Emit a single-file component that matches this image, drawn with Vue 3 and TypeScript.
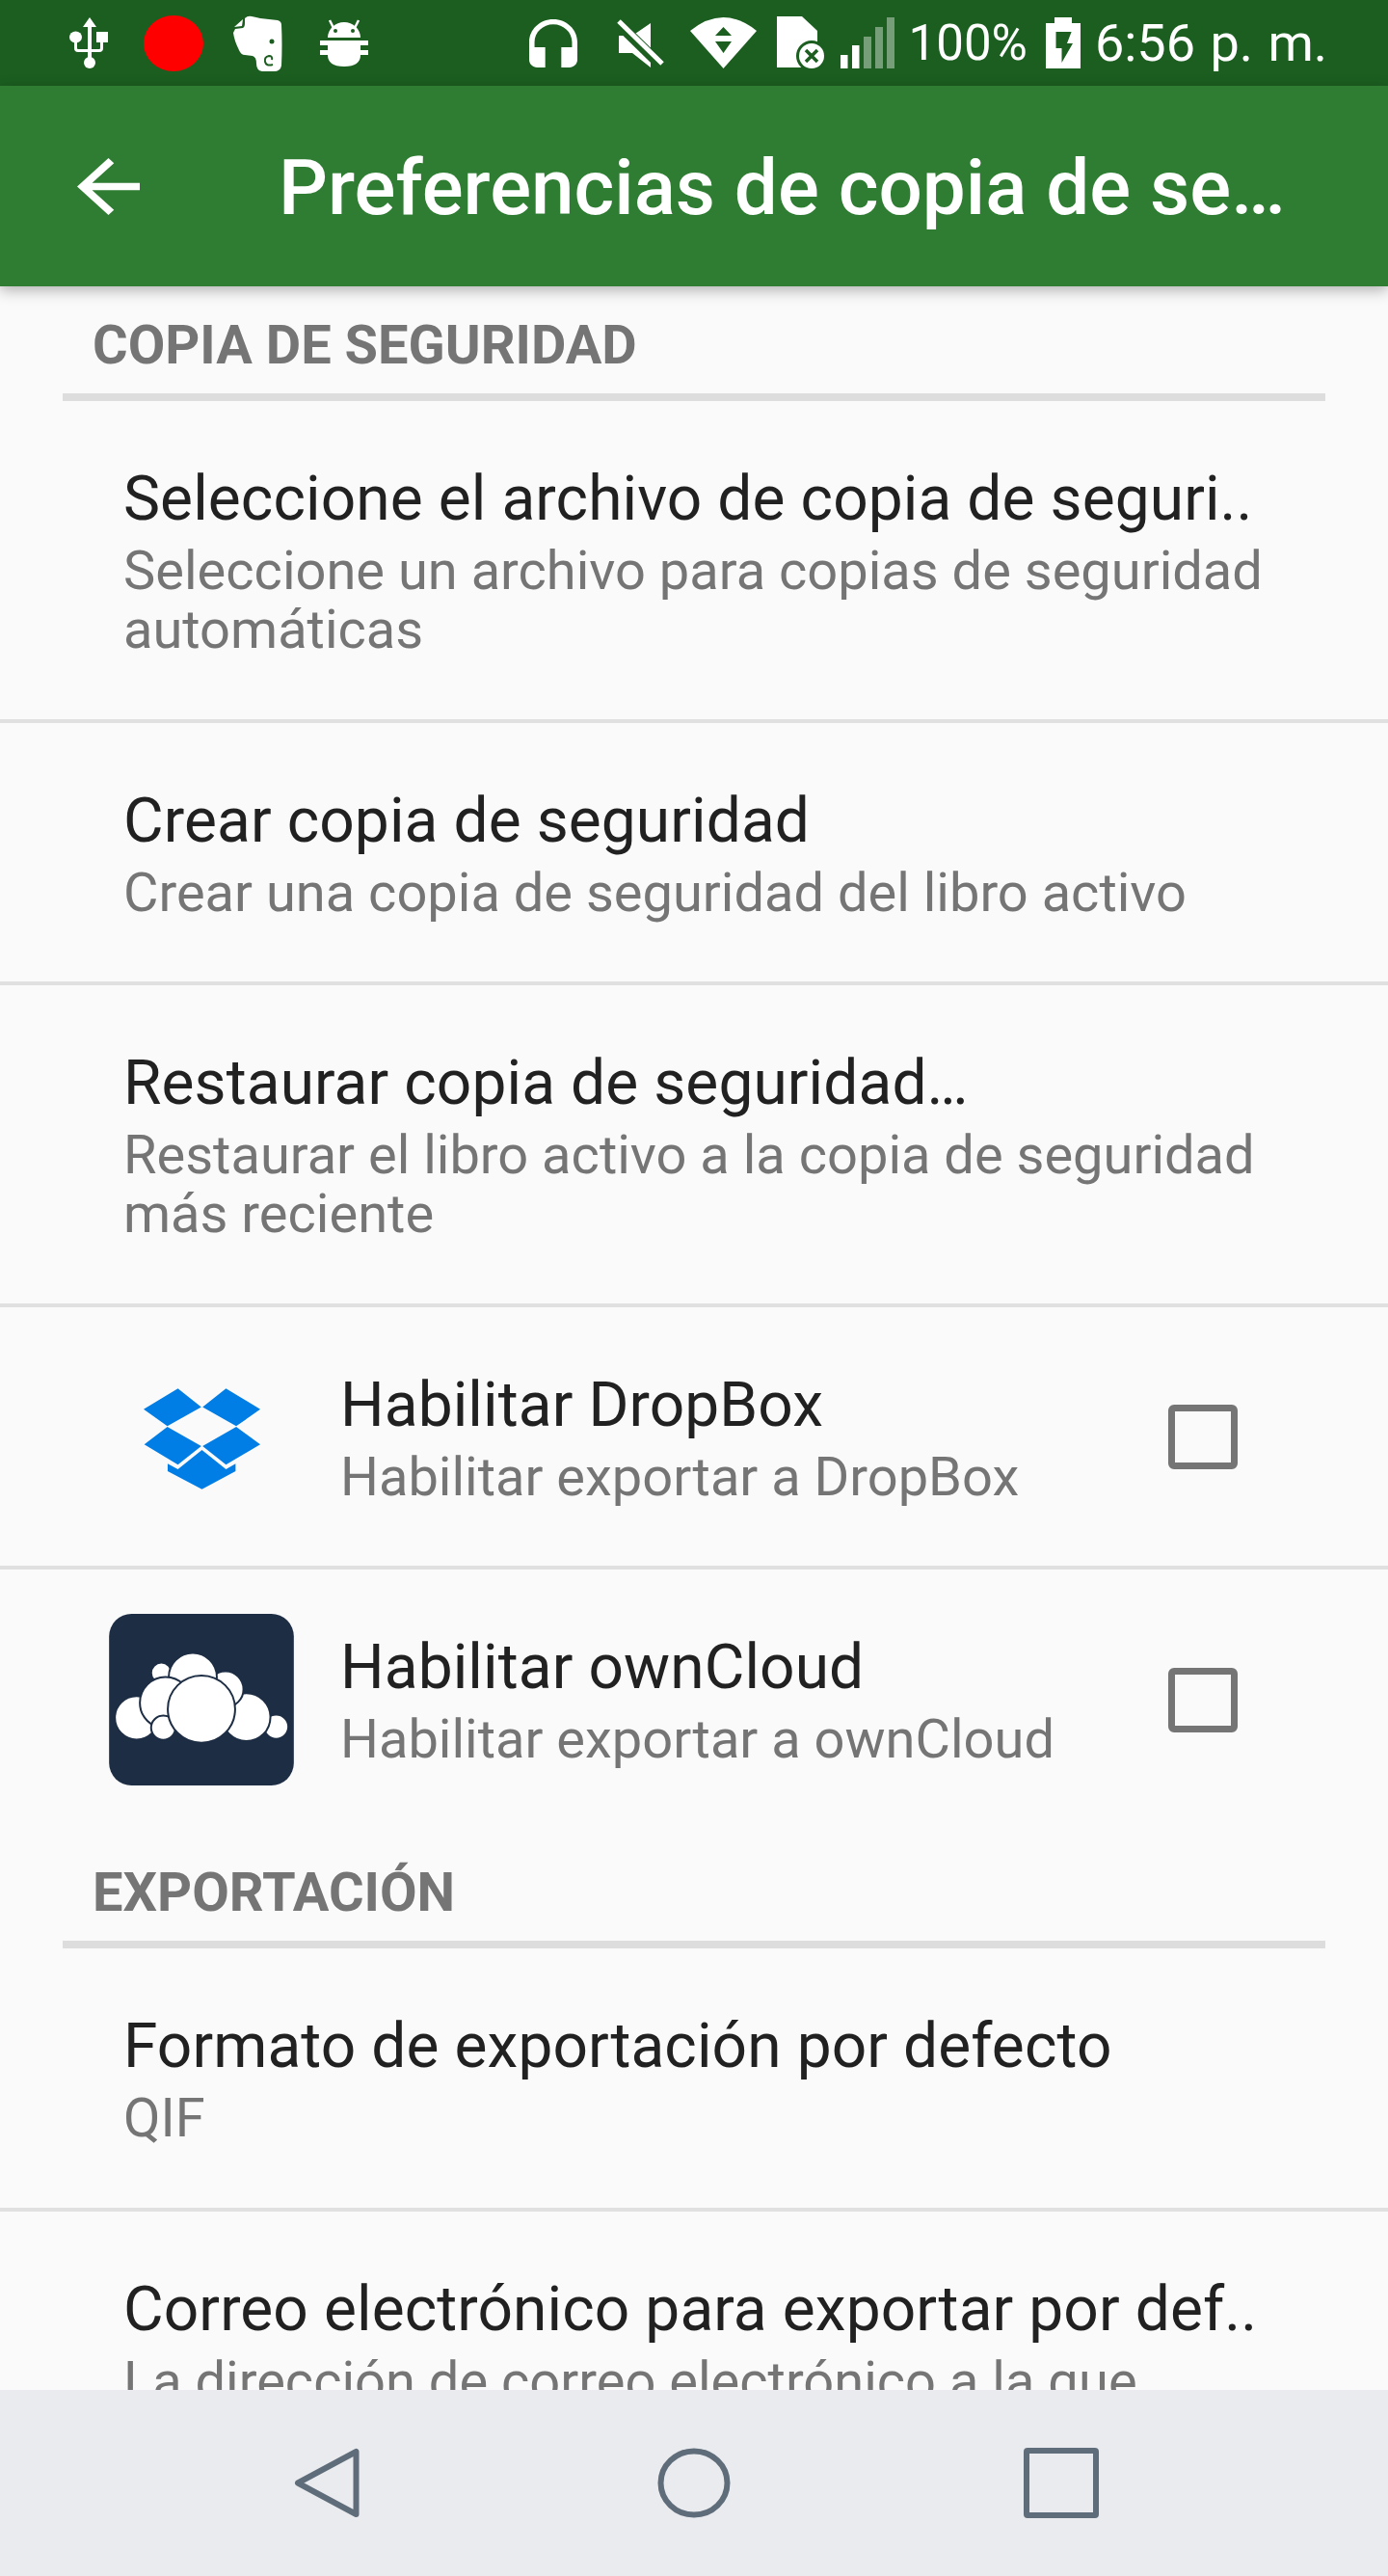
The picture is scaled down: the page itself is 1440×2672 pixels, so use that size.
<script setup lang="ts">
interface Pref {
  title: string
  summary: string[]
  icon?: 'dropbox' | 'owncloud'
  last?: boolean
}

const backupPrefs: Pref[] = [
  {
    title: 'Seleccione el archivo de copia de seguri..',
    summary: ['Seleccione un archivo para copias de seguridad', 'automáticas']
  },
  {
    title: 'Crear copia de seguridad',
    summary: ['Crear una copia de seguridad del libro activo']
  },
  {
    title: 'Restaurar copia de seguridad…',
    summary: ['Restaurar el libro activo a la copia de seguridad', 'más reciente']
  },
  {
    title: 'Habilitar DropBox',
    summary: ['Habilitar exportar a DropBox'],
    icon: 'dropbox'
  },
  {
    title: 'Habilitar ownCloud',
    summary: ['Habilitar exportar a ownCloud'],
    icon: 'owncloud',
    last: true
  }
]

const exportPrefs: Pref[] = [
  {
    title: 'Formato de exportación por defecto',
    summary: ['QIF']
  },
  {
    title: 'Correo electrónico para exportar por def..',
    summary: ['La dirección de correo electrónico a la que'],
    last: true
  }
]

const sections = [
  { name: 'COPIA DE SEGURIDAD', prefs: backupPrefs },
  { name: 'EXPORTACIÓN', prefs: exportPrefs }
]

const cloudCircles = [
  [185, 1147, 68],
  [620, 1175, 38],
  [527, 1145, 75],
  [462, 1058, 56],
  [262, 1007, 32],
  [360, 1020, 75],
  [275, 1100, 80],
  [268, 1178, 38],
  [387, 1120, 105]
]
</script>

<template>
  <div class="phone">
    <div class="status-bar">
      <div class="status-left">
        <svg class="usb" width="41" height="53" viewBox="0 0 41 53">
          <path d="M21 0l7 10h-5v38h-4V10h-5z" fill="#fff" />
          <circle cx="21" cy="47" r="6" fill="#fff" />
          <ellipse cx="6.5" cy="20.5" rx="6.5" ry="6" fill="#fff" />
          <rect x="28" y="15" width="12" height="11" fill="#fff" />
          <path d="M6.5 24v8q0 2.500 2.500 2.500h22q2.500 0 2.500-2.500v-8" fill="none" stroke="#fff" stroke-width="3" />
        </svg>
        <svg class="rec" width="62" height="58" viewBox="0 0 62 58">
          <ellipse cx="31" cy="29" rx="31" ry="29" fill="#f00" />
        </svg>
        <svg class="elephant" width="52" height="58" viewBox="0 0 52 58">
          <path d="M1 12l9-8-1 7z" fill="#fff" />
          <path d="M12 3Q15 0 19 1Q24 2 28 3L46 5Q50 6 50 10Q51 30 50 52Q49 58 42 58H30Q24 57 24 50Q24 43 20 42L12 41Q8 41 6 36Q1 26 0 18L2 14L10 13Q12 12 12 8Z" fill="#fff" />
          <circle cx="40" cy="27" r="2.500" fill="#1b5e20" />
          <path d="M41 51q-7 2-8-3t4-6q4 0 3 4" fill="none" stroke="#1b5e20" stroke-width="2" />
        </svg>
        <svg class="android" width="50" height="49" viewBox="0 0 50 49">
          <path d="M8 19a17 16 0 0 1 34 0z" fill="#fff" />
          <path d="M10 1l4 8M40 1l-4 8" stroke="#fff" stroke-width="2.500" />
          <circle cx="16" cy="12" r="2" fill="#1b5e20" />
          <circle cx="34" cy="12" r="2" fill="#1b5e20" />
          <path d="M0 22H50V27H42V32H50V37H42Q42 49 25 49T8 37H0V32H8V27H0z" fill="#fff" />
        </svg>
      </div>
      <div class="status-right">
        <svg class="headset" width="50" height="50" viewBox="3 1 18 19" preserveAspectRatio="none">
          <path d="M12 1c-5 0-9 4-9 9v7c0 1.660 1.340 3 3 3h3v-8H5v-2c0-3.870 3.130-7 7-7s7 3.130 7 7v2h-4v8h3c1.660 0 3-1.340 3-3v-7c0-5-4.030-9-9-9z" fill="#fff" />
        </svg>
        <svg class="mute" width="51" height="50" viewBox="0 0 51 50">
          <path d="M3 17H17L36 4V50L17 35H3z" fill="#fff" />
          <path d="M1 3L47 48" stroke="#1b5e20" stroke-width="11" />
          <path d="M3 2L48 46" stroke="#fff" stroke-width="5" />
        </svg>
        <svg class="wifi" width="69" height="53" viewBox="0 0 69 53">
          <path d="M0 14Q34.500-14 69 14L34.500 53z" fill="#fff" />
          <path d="M34.500 10l8.500 9H26zM26 25h17l-8.500 12z" fill="#1b5e20" />
        </svg>
        <svg class="sim" width="52" height="56" viewBox="0 0 52 56">
          <path d="M0 0H26L42 15V53H0z" fill="#fff" />
          <circle cx="36" cy="41" r="16" fill="#1b5e20" />
          <circle cx="36" cy="41" r="13" fill="#fff" />
          <path d="M30 35l12 12M42 35l-12 12" stroke="#1b5e20" stroke-width="3.500" />
        </svg>
        <svg class="signal" width="56" height="53" viewBox="0 0 56 53">
          <rect x="0" y="39" width="7.500" height="14" fill="#fff" />
          <rect x="12" y="29" width="7.500" height="24" fill="#fff" />
          <rect x="24" y="20" width="8" height="33" fill="#fff" fill-opacity="0.4" />
          <rect x="36" y="10" width="8" height="43" fill="#fff" fill-opacity="0.4" />
          <rect x="48" y="0" width="8" height="53" fill="#fff" fill-opacity="0.4" />
        </svg>
        <span class="percent">100%</span>
        <svg class="battery" width="36" height="53" viewBox="0 0 36 53">
          <path d="M9 0H27V6H36V53H0V6H9z" fill="#fff" />
          <path d="M10.500 15H26.600L22 27H28L16.500 47V32H10.500z" fill="#1b5e20" />
        </svg>
        <span class="clock">6:56 p. m.</span>
      </div>
    </div>

    <header class="toolbar">
      <svg class="back" width="65" height="59" viewBox="4 4 16 16" preserveAspectRatio="none">
        <path d="M20 11H7.830l5.590-5.590L12 4l-8 8 8 8 1.410-1.410L7.830 13H20v-2z" fill="#fff" />
      </svg>
      <h1 class="title">Preferencias de copia de se…</h1>
    </header>

    <main class="content">
      <section v-for="section in sections" :key="section.name" class="section">
        <div class="category">{{ section.name }}</div>
        <div
          v-for="pref in section.prefs"
          :key="pref.title"
          class="row"
          :class="{ last: pref.last, 'has-icon': pref.icon }"
        >
          <div v-if="pref.icon" class="row-icon">
            <svg v-if="pref.icon === 'dropbox'" class="dropbox" width="121" height="105" viewBox="208 120 364 315">
              <path
                d="M315 120L388 178L282 238L208 185zM465 120L572 185L497 238L392 178zM282 240L388 300L315 358L210 295zM497 240L572 295L465 358L392 300zM283 355L315 372L390 312L465 372L495 355V378L390 435L283 378z"
                fill="#007ee5"
              />
            </svg>
            <svg v-else class="owncloud" width="192" height="178" viewBox="99 823 576 535">
              <rect x="99" y="823" width="576" height="535" rx="70" fill="#1d2d44" />
              <circle
                v-for="(c, i) in cloudCircles"
                :key="i"
                :cx="c[0]"
                :cy="c[1]"
                :r="c[2]"
                fill="#fff"
                stroke="#1d2d44"
                stroke-width="6"
              />
            </svg>
          </div>
          <div class="row-text">
            <div class="row-title">{{ pref.title }}</div>
            <div v-for="line in pref.summary" :key="line" class="row-summary">{{ line }}</div>
          </div>
          <div v-if="pref.icon" class="checkbox"></div>
        </div>
      </section>
    </main>

    <nav class="nav-bar">
      <svg width="68" height="73" viewBox="0 0 68 73">
        <path d="M64.500 4V69L4 36.500z" fill="none" stroke="#5f6d7a" stroke-width="6" stroke-linejoin="round" />
      </svg>
      <svg class="nav-home" width="76" height="73" viewBox="0 0 76 73">
        <ellipse cx="38" cy="36.500" rx="34.500" ry="33" fill="none" stroke="#5f6d7a" stroke-width="6" />
      </svg>
      <svg class="nav-recents" width="78" height="73" viewBox="0 0 78 73">
        <rect x="3" y="3" width="72" height="67" rx="1" fill="none" stroke="#5f6d7a" stroke-width="6" />
      </svg>
    </nav>
  </div>
</template>

<style scoped>
.phone {
  display: flex;
  flex-direction: column;
  width: 1440px;
  height: 2672px;
  overflow: hidden;
  background: #fafafa;
  font-family: Roboto, "Liberation Sans", sans-serif;
}

.status-bar {
  display: flex;
  justify-content: space-between;
  align-items: center;
  flex: none;
  height: 89px;
  padding: 0 63px 0 72px;
  box-sizing: border-box;
  background: #1b5e20;
  color: #fff;
}

.status-left,
.status-right {
  display: flex;
  align-items: center;
}

.rec { margin-left: 36px; }
.elephant { margin-left: 31px; }
.android { margin-left: 38px; }
.mute { margin-left: 40px; }
.wifi { margin-left: 26px; }
.sim { margin-left: 21px; }
.signal { margin-left: 14px; }
.battery { margin-left: 19px; }

.percent,
.clock {
  line-height: 53px;
  white-space: nowrap;
}

.percent {
  margin-left: 15px;
  font-size: 51px;
}

.clock {
  margin-left: 15px;
  font-size: 54px;
  word-spacing: 2px;
}

.toolbar {
  position: relative;
  z-index: 1;
  display: flex;
  align-items: center;
  flex: none;
  height: 208px;
  padding-left: 80px;
  box-sizing: border-box;
  background: #2e7d32;
  box-shadow: 0 4px 14px rgba(0, 0, 0, 0.3);
}

.title {
  margin: 3px 0 0 144px;
  color: #fff;
  font-size: 80px;
  font-weight: 500;
  line-height: 94px;
  white-space: nowrap;
}

.content {
  flex: 1;
  min-height: 0;
  overflow: hidden;
}

.section + .section {
  margin-top: 1.5px;
}

.category {
  height: 119px;
  margin: 0 65px;
  padding: 30px 0 0 31px;
  box-sizing: border-box;
  border-bottom: 8px solid #ddd;
  color: #757575;
  font-size: 56px;
  font-weight: 700;
  line-height: 62px;
}

.row {
  display: flex;
  align-items: center;
  padding: 57px 0 61.5px 128px;
  border-bottom: 4px solid #e0e0e0;
}

.row.last {
  border-bottom-color: transparent;
}

.row.has-icon {
  padding-left: 113px;
}

.row-icon {
  display: flex;
  justify-content: center;
  align-items: center;
  width: 192px;
  height: 150px;
  margin-right: 48px;
}

.row-icon svg {
  flex: none;
}

.dropbox {
  margin-top: 9px;
}

.owncloud {
  margin-top: 6px;
}

.row-text {
  flex: 1;
}

.row-title {
  color: #212121;
  font-size: 64px;
  letter-spacing: 0.1px;
  line-height: 89px;
  white-space: nowrap;
}

.row-summary {
  color: #757575;
  font-size: 56px;
  line-height: 61px;
  white-space: nowrap;
}

.checkbox {
  width: 72px;
  height: 67px;
  margin: 6px 156px 0 0;
  box-sizing: border-box;
  border: 7px solid #757575;
  border-radius: 6px;
}

.nav-bar {
  position: relative;
  z-index: 1;
  display: flex;
  align-items: center;
  flex: none;
  height: 193px;
  padding: 0 0 0 305px;
  box-sizing: border-box;
  background: #eaebef;
}

.nav-home { margin-left: 309px; }
.nav-recents { margin-left: 304px; }
</style>

<style>
html, body { margin: 0; }
</style>
